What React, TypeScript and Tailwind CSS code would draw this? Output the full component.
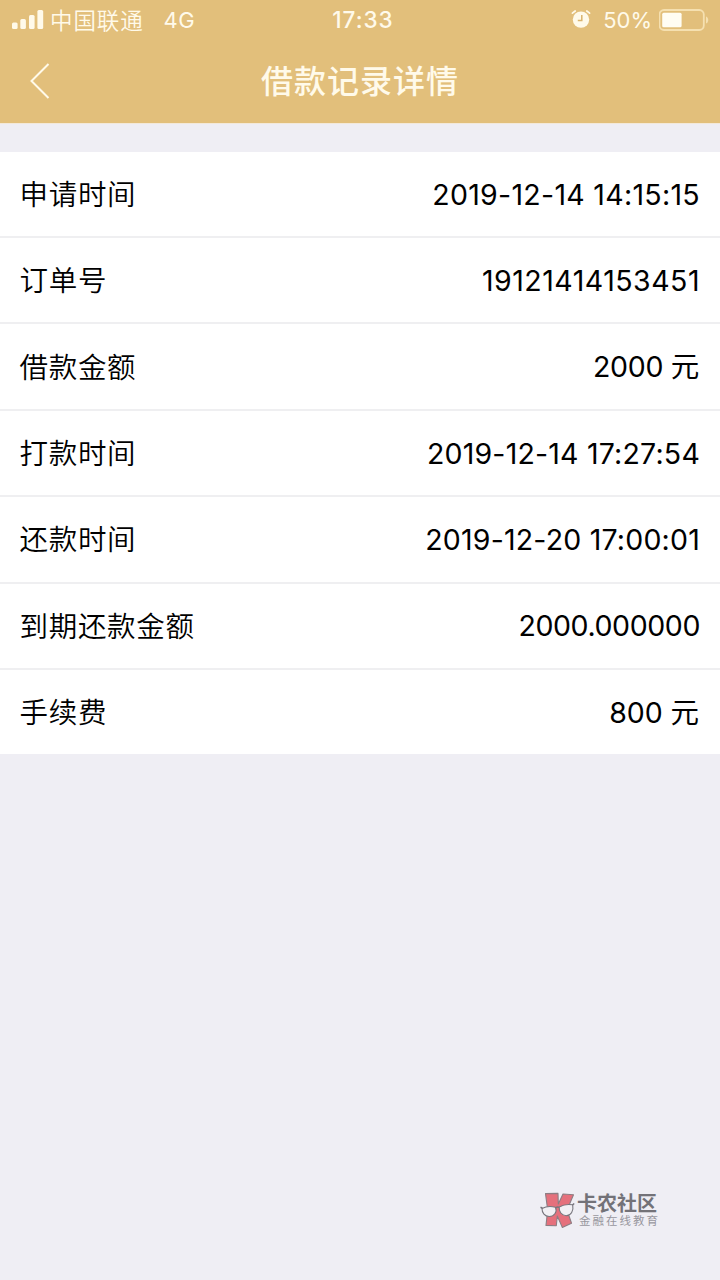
interface RecordItem {
  label: string;
  value: string;
  className: string;
}

const records: RecordItem[] = [
  { label: '申请时间', value: '2019-12-14 14:15:15', className: 'tracking-[0.3px]' },
  { label: '订单号', value: '19121414153451', className: 'tracking-[0.5px]' },
  { label: '借款金额', value: '2000 元', className: 'pr-px tracking-[-0.3px]' },
  { label: '打款时间', value: '2019-12-14 17:27:54', className: 'tracking-[0.2px]' },
  { label: '还款时间', value: '2019-12-20 17:00:01', className: 'tracking-[0.2px]' },
  { label: '到期还款金额', value: '2000.000000', className: 'tracking-[-0.4px]' },
  { label: '手续费', value: '800 元', className: 'pr-px tracking-[-0.05px]' },
];

function SignalIcon() {
  return (
    <svg className="w-8 h-5" viewBox="0 0 32 20" fill="currentColor">
      <rect x="0" y="12.5" width="5.6" height="6.5" rx="1.5" />
      <rect x="8.3" y="9" width="5.6" height="10" rx="1.5" />
      <rect x="17" y="5" width="5.6" height="14" rx="1.5" />
      <rect x="25.4" y="0" width="5.8" height="19" rx="1.5" />
    </svg>
  );
}

function AlarmIcon() {
  return (
    <svg className="w-5 h-5 -mt-0.5" viewBox="0 0 20 20" fill="none">
      <circle cx="10" cy="10.6" r="8.2" fill="currentColor" />
      <path d="M1.4 4.2 4.2 2M18.6 4.2 15.8 2" stroke="currentColor" strokeWidth="1.7" strokeLinecap="round" />
      <path d="M10.8 6v5.4H6.8" stroke="#d9b36c" strokeWidth="1.5" />
    </svg>
  );
}

function BatteryIcon() {
  return (
    <svg className="w-[51px] h-6" viewBox="0 0 51 24" fill="none">
      <rect x="0.5" y="2" width="44.3" height="20" rx="4.5" stroke="#f5e0b0" strokeWidth="1.8" />
      <path d="M47 8.5c3 1 3 6 0 7z" fill="#f5e0b0" />
      <rect x="3.2" y="4.7" width="19.4" height="14.6" rx="1.5" fill="#fffdf3" />
    </svg>
  );
}

function StatusBar() {
  return (
    <div className="h-10 pl-3 pr-[10px] grid grid-cols-3 items-center">
      <div className="flex items-center">
        <SignalIcon />
        <span className="ml-1.5 mt-px text-[22.5px] tracking-[0.9px] font-[350]">中国联通</span>
        <span className="ml-5 text-[22px] tracking-[0.4px]">4G</span>
      </div>
      <div className="pl-1 text-center text-[22.5px] tracking-[1px] font-medium">17:33</div>
      <div className="flex items-center justify-end">
        <AlarmIcon />
        <span className="ml-3 mr-[7px] text-[22px]">50%</span>
        <BatteryIcon />
      </div>
    </div>
  );
}

function Watermark() {
  return (
    <div className="absolute left-[540px] top-[1190px] flex items-start">
      <svg className="w-9 h-10" viewBox="0 0 36 40" fill="none" strokeLinejoin="round">
        <path
          d="M5.5 3.6 18 3.4 18.3 14 23 4 33.5 4.8 27 20 31.5 33.2 22.3 37.4 17.3 26 16.3 35.7 6 35.4 7.7 20z"
          fill="#e5707c"
          stroke="#8d7d83"
          strokeWidth="1.1"
        />
        <path d="M2 18.5q6-3.200 13.500-1.200c2 5-1.500 9.200-6.300 9.200-4.500 0-7.200-3.500-7.200-8z" fill="#f2f0f4" stroke="#77757c" strokeWidth="1.1" />
        <path d="M19.200 17q6-3.500 13.500-2.200c1.200 6-1.700 10.700-6.500 10.900-4.500 0-7.500-4.200-7-8.700z" fill="#f2f0f4" stroke="#77757c" strokeWidth="1.1" />
        <path d="M0.5 17.300 2.500 18.200M15.500 18q1.800-1.400 3.700-.6M32.500 15l1.700-1.500" stroke="#77757c" strokeWidth="1.5" />
      </svg>
      <div className="ml-px mt-1 flex flex-col text-[#737278] whitespace-nowrap">
        <span className="text-[20px] leading-5 font-bold">卡农社区</span>
        <span className="ml-0.5 mt-px text-[11.5px] leading-3 tracking-[2px] text-[#98979e]">金融在线教育</span>
      </div>
    </div>
  );
}

export default function App() {
  return (
    <div className="relative w-[720px] h-[1280px] overflow-hidden bg-[#efeef4] font-['Inter','Noto_Sans_CJK_SC',sans-serif]">
      <header className="h-[124px] bg-[#e2bf7b] text-[#fffaea] border-b border-[#f3e9da]">
        <StatusBar />
        <div className="h-[82px] grid grid-cols-[1fr_auto_1fr] items-center">
          <svg className="ml-[30px] w-5 h-9" viewBox="0 0 20 36" fill="none">
            <path d="M18.5 1 1.5 18l17 17" stroke="currentColor" strokeWidth="2" />
          </svg>
          <h1 className="pt-px text-[32px] tracking-[1px] font-medium">借款记录详情</h1>
        </div>
      </header>

      <main className="mt-7 bg-white text-black">
        {records.map(item => (
          <div
            key={item.label}
            className="h-[86.4px] first:h-[86px] last:h-[84px] pt-0.5 px-5 flex items-center justify-between border-b-2 last:border-b-0 border-[#efeff1]"
          >
            <span className="-ml-[0.5px] pt-px text-[28.5px] tracking-[0.7px] font-[350]">{item.label}</span>
            <span className={`text-[28.5px] ${item.className}`}>{item.value}</span>
          </div>
        ))}
      </main>

      <Watermark />
    </div>
  );
}
